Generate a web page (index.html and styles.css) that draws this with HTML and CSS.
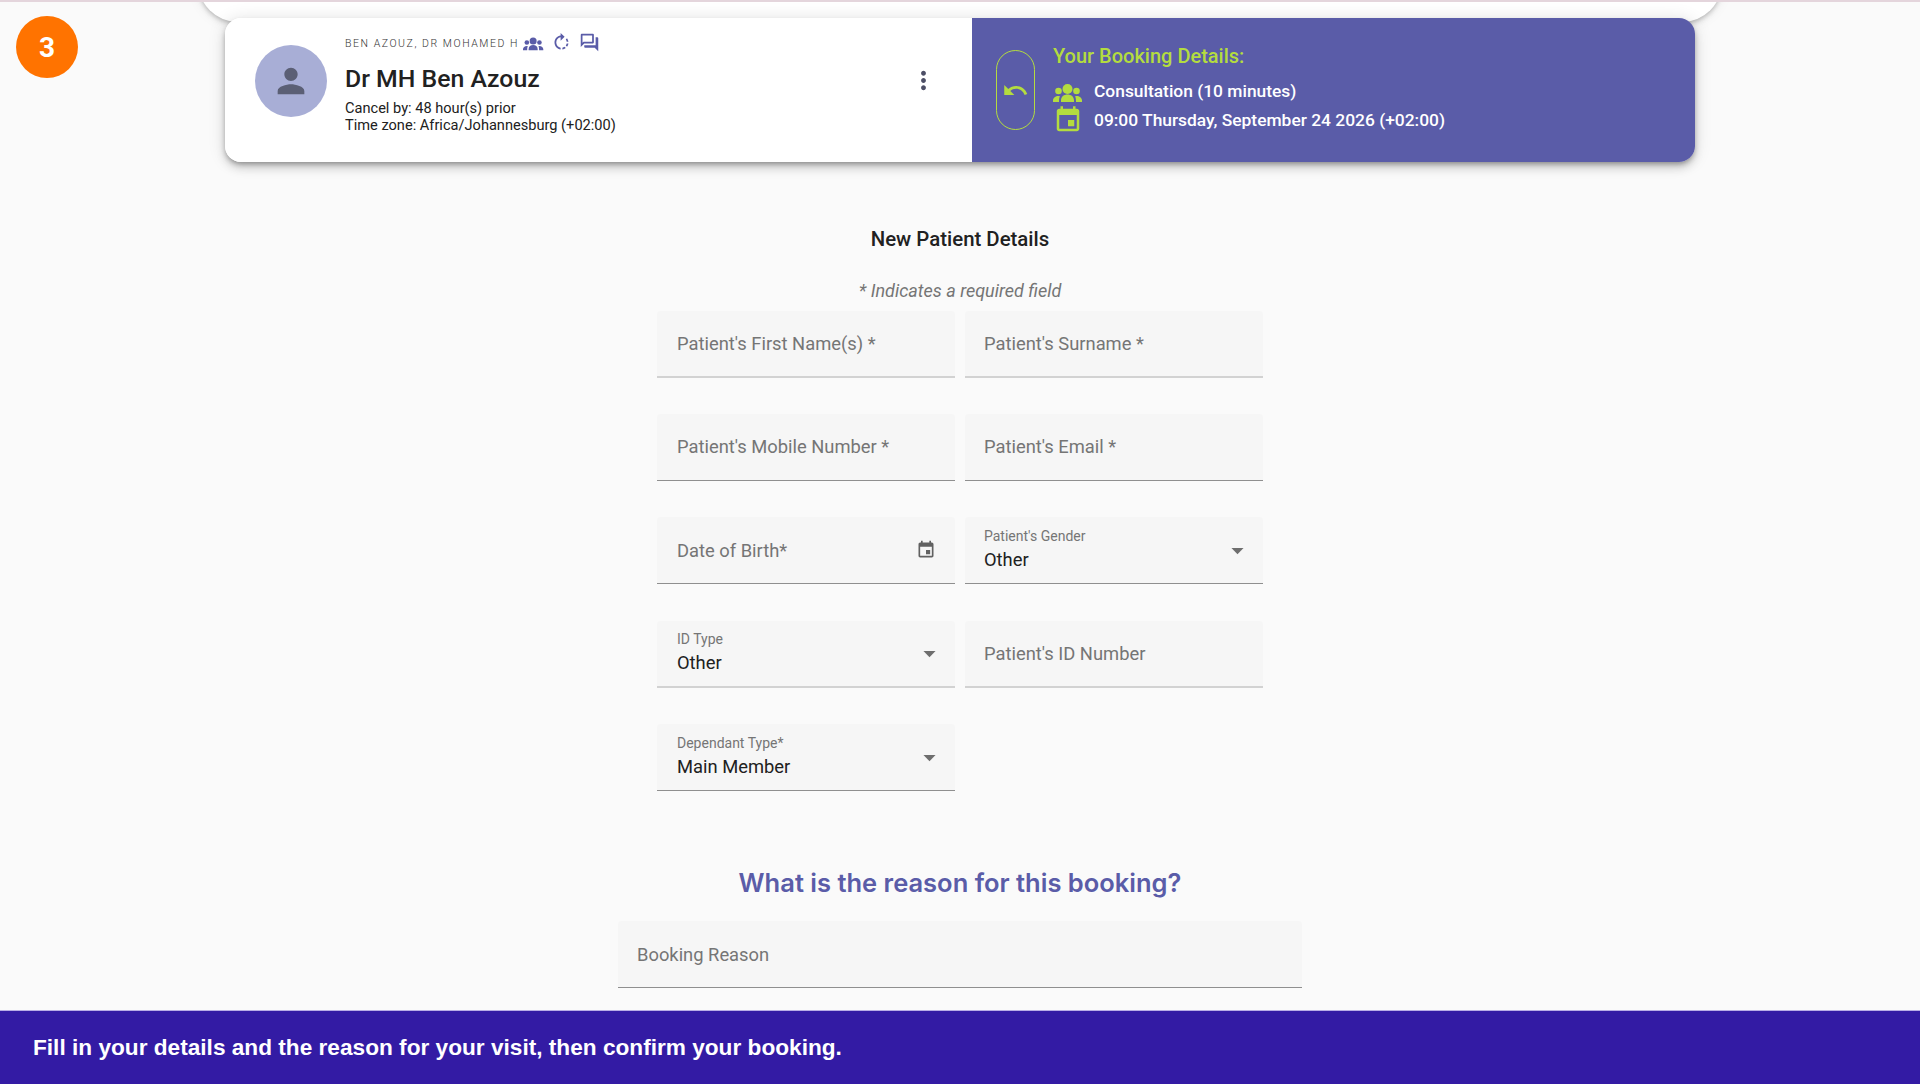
FILE: index.html
```html
<!DOCTYPE html>
<html lang="en">
<head>
    <meta charset="UTF-8">
    <meta name="viewport" content="width=device-width, initial-scale=1.0">
    <title>New Patient Details</title>
    <link rel="stylesheet" href="styles.css">
</head>
<body>
    <div class="step-badge">3</div>

    <div class="page">
        <main class="content">
            <div class="top-sheet"></div>

            <!-- Doctor and booking summary -->
            <section class="summary-card">
                <div class="doctor-panel">
                    <div class="avatar">
                        <svg viewBox="0 0 24 24" class="avatar-icon"><path d="M12 12c2.21 0 4-1.79 4-4s-1.79-4-4-4-4 1.79-4 4 1.79 4 4 4zm0 2c-2.67 0-8 1.34-8 4v2h16v-2c0-2.66-5.33-4-8-4z"/></svg>
                    </div>
                    <div class="doctor-info">
                        <div class="overline-row">
                            <span class="overline">BEN AZOUZ, DR MOHAMED H</span>
                            <svg viewBox="0 -2 30 30" class="mini-icon"><circle cx="14.5" cy="11" r="5"/><circle cx="5.5" cy="13" r="3.3"/><circle cx="23.5" cy="13" r="3.3"/><path d="M8 24v-1.5c0-4 3-6 6.5-6s6.5 2 6.5 6V24zM0 24v-1.5c0-2.5 2.5-4.5 5.5-4.5l1.5.2c-.8 1.2-1 2.8-1 5.8zM29 24v-1.5c0-2.5-2.5-4.5-5.500-4.500l-1.500.2c.8 1.2 1 2.800 1 5.800z"/></svg>
                            <svg viewBox="0 0 24 24" class="mini-icon"><path d="M15.55 5.55L11 1v3.07C7.06 4.56 4 7.92 4 12s3.05 7.44 7 7.93v-2.02c-2.84-.48-5-2.94-5-5.91s2.16-5.43 5-5.91V10l4.55-4.45zM19.93 11c-.17-1.39-.72-2.73-1.62-3.89l-1.42 1.42c.54.75.88 1.6 1.02 2.47h2.02zM13 17.9v2.02c1.39-.17 2.74-.71 3.9-1.61l-1.44-1.44c-.75.54-1.59.89-2.46 1.03zm3.89-2.42l1.42 1.41c.9-1.16 1.45-2.5 1.62-3.89h-2.02c-.14.87-.48 1.72-1.02 2.48z"/></svg>
                            <svg viewBox="0 0 24 24" class="mini-icon"><path d="M15 4v7H5.17L4 12.17V4h11m1-2H3c-.55 0-1 .45-1 1v14l4-4h10c.55 0 1-.45 1-1V3c0-.55-.45-1-1-1zm5 4h-2v9H6v2c0 .55.45 1 1 1h11l4 4V7c0-.55-.45-1-1-1z"/></svg>
                        </div>
                        <h1 class="doctor-name">Dr MH Ben Azouz</h1>
                        <p class="doctor-meta">Cancel by: 48 hour(s) prior<br>Time zone: Africa/Johannesburg (+02:00)</p>
                    </div>
                    <svg viewBox="0 0 24 24" class="more-icon"><path d="M12 8c1.1 0 2-.9 2-2s-.9-2-2-2-2 .9-2 2 .9 2 2 2zm0 2c-1.1 0-2 .9-2 2s.9 2 2 2 2-.9 2-2-.9-2-2-2zm0 6c-1.1 0-2 .9-2 2s.9 2 2 2 2-.9 2-2-.9-2-2-2z"/></svg>
                </div>
                <div class="booking-panel">
                    <div class="back-pill">
                        <svg viewBox="0 0 24 24" class="back-icon"><path d="M12.5 8c-2.65 0-5.05.99-6.9 2.6L2 7v9h9l-3.62-3.62c1.39-1.16 3.16-1.88 5.12-1.88 3.54 0 6.55 2.31 7.6 5.5l2.37-.78C21.08 11.03 17.15 8 12.5 8z"/></svg>
                    </div>
                    <div class="booking-info">
                        <div class="booking-title">Your Booking Details:</div>
                        <div class="booking-row">
                            <svg viewBox="0 -2 30 30" class="booking-icon"><circle cx="14.5" cy="11" r="5"/><circle cx="5.5" cy="13" r="3.3"/><circle cx="23.5" cy="13" r="3.3"/><path d="M8 24v-1.5c0-4 3-6 6.5-6s6.5 2 6.5 6V24zM0 24v-1.5c0-2.5 2.5-4.500 5.500-4.500l1.500.2c-.8 1.200-1 2.800-1 5.800zM29 24v-1.500c0-2.500-2.500-4.500-5.500-4.500l-1.500.2c.8 1.200 1 2.800 1 5.800z"/></svg>
                            <span>Consultation (10 minutes)</span>
                        </div>
                        <div class="booking-row">
                            <svg viewBox="0 0 24 24" class="booking-icon"><path d="M17 12h-5v5h5v-5zM16 1v2H8V1H6v2H5c-1.11 0-1.99.9-1.99 2L3 19c0 1.1.89 2 2 2h14c1.1 0 2-.9 2-2V5c0-1.1-.9-2-2-2h-1V1h-2zm3 18H5V8h14v11z"/></svg>
                            <span>09:00 Thursday, September 24 2026 (+02:00)</span>
                        </div>
                    </div>
                </div>
            </section>

            <h2 class="form-title">New Patient Details</h2>
            <p class="form-hint">* Indicates a required field</p>

            <div class="form-grid">
                <div class="field field-light"><span class="field-label">Patient's First Name(s) *</span></div>
                <div class="field field-light"><span class="field-label">Patient's Surname *</span></div>
                <div class="field"><span class="field-label">Patient's Mobile Number *</span></div>
                <div class="field"><span class="field-label">Patient's Email *</span></div>
                <div class="field">
                    <span class="field-label">Date of Birth*</span>
                    <svg viewBox="0 0 24 24" class="field-icon"><path d="M17 12h-5v5h5v-5zM16 1v2H8V1H6v2H5c-1.11 0-1.99.9-1.99 2L3 19c0 1.1.89 2 2 2h14c1.1 0 2-.9 2-2V5c0-1.1-.9-2-2-2h-1V1h-2zm3 18H5V8h14v11z"/></svg>
                </div>
                <div class="field">
                    <div class="field-stack"><span class="field-small">Patient's Gender</span><span class="field-value">Other</span></div>
                    <svg viewBox="0 0 24 24" class="field-arrow"><path d="M7 10l5 5 5-5z"/></svg>
                </div>
                <div class="field field-light">
                    <div class="field-stack"><span class="field-small">ID Type</span><span class="field-value">Other</span></div>
                    <svg viewBox="0 0 24 24" class="field-arrow"><path d="M7 10l5 5 5-5z"/></svg>
                </div>
                <div class="field field-light"><span class="field-label">Patient's ID Number</span></div>
                <div class="field">
                    <div class="field-stack"><span class="field-small">Dependant Type*</span><span class="field-value">Main Member</span></div>
                    <svg viewBox="0 0 24 24" class="field-arrow"><path d="M7 10l5 5 5-5z"/></svg>
                </div>
            </div>

            <h2 class="reason-title">What is the reason for this booking?</h2>
            <div class="field reason-field"><span class="field-label">Booking Reason</span></div>
        </main>

        <footer class="hint-bar">Fill in your details and the reason for your visit, then confirm your booking.</footer>
    </div>
</body>
</html>
```

FILE: styles.css
```css
* {
    box-sizing: border-box;
}

body {
    margin: 0;
    font-family: Roboto, Arial, sans-serif;
    background-color: #fafafa;
    color: #212121;
}

.page {
    height: 100vh;
    display: flex;
    flex-direction: column;
    overflow: hidden;
    border-top: 2px solid #e4d5dc;
}

.content {
    flex: 1;
    min-height: 0;
    display: flex;
    flex-direction: column;
    align-items: center;
}

/* Step badge */
.step-badge {
    position: absolute;
    top: 16px;
    left: 16px;
    width: 62px;
    height: 62px;
    display: flex;
    align-items: center;
    justify-content: center;
    border-radius: 50%;
    background-color: #ff7300;
    color: #fff;
    font-size: 28px;
    font-weight: 700;
}

/* Sheet peeking out above the card */
.top-sheet {
    width: 1524px;
    height: 43px;
    margin-top: -23px;
    background-color: #fff;
    border-radius: 0 0 40px 40px;
    box-shadow: 0 2px 4px -1px rgba(0, 0, 0, 0.2), 0 4px 5px rgba(0, 0, 0, 0.08), 0 1px 14px rgba(0, 0, 0, 0.08);
    flex-shrink: 0;
}

/* Summary card */
.summary-card {
    width: 1470px;
    height: 144px;
    margin-top: -4px;
    display: flex;
    position: relative;
    border-radius: 16px;
    overflow: hidden;
    box-shadow: 0 3px 5px -1px rgba(0, 0, 0, 0.3), 0 6px 10px rgba(0, 0, 0, 0.14), 0 1px 18px rgba(0, 0, 0, 0.12);
    flex-shrink: 0;
}

.doctor-panel {
    width: 747px;
    display: flex;
    align-items: flex-start;
    background-color: #fff;
    padding: 27px 0 0 30px;
}

.avatar {
    width: 72px;
    height: 72px;
    display: flex;
    align-items: center;
    justify-content: center;
    border-radius: 50%;
    background-color: #a8aed6;
    flex-shrink: 0;
}

.avatar-icon {
    width: 40px;
    height: 40px;
    fill: #5b5f75;
}

.doctor-info {
    margin-left: 18px;
    margin-top: -15px;
    flex: 1;
}

.overline-row {
    height: 24px;
    display: flex;
    align-items: center;
    gap: 7px;
}

.overline {
    margin-top: 2px;
    margin-right: -3px;
    font-size: 10.5px;
    font-weight: 300;
    letter-spacing: 1.55px;
    color: #333;
}

.mini-icon {
    width: 21px;
    height: 21px;
    fill: #5a5ca8;
}

.doctor-name {
    margin: 10px 0 0;
    font-size: 24.8px;
    line-height: 30px;
    font-weight: 500;
}

.doctor-meta {
    margin: 6px 0 0;
    font-size: 14.6px;
    line-height: 17px;
}

.more-icon {
    width: 29px;
    height: 29px;
    margin: 21px 34px 0 0;
    fill: #4d4f66;
}

.booking-panel {
    flex: 1;
    display: flex;
    background-color: #5a5ca8;
    padding: 32px 0 0 24px;
}

.back-pill {
    width: 39px;
    height: 80px;
    display: flex;
    align-items: center;
    justify-content: center;
    border: 1px solid #b4dc3f;
    border-radius: 20px;
    flex-shrink: 0;
}

.back-icon {
    width: 27px;
    height: 27px;
    fill: #b4dc3f;
}

.booking-info {
    margin-left: 18px;
    margin-top: -6px;
}

.booking-title {
    font-size: 20px;
    line-height: 24px;
    font-weight: 500;
    color: #b4dc3f;
    margin-bottom: 8px;
}

.booking-row {
    height: 29px;
    display: flex;
    align-items: center;
    gap: 11px;
    color: #fff;
    font-size: 17.4px;
    font-weight: 500;
}

.booking-icon {
    width: 30px;
    height: 30px;
    fill: #b4dc3f;
}

/* Form */
.form-title {
    margin: 65px 0 0;
    font-size: 20.4px;
    line-height: 24px;
    font-weight: 500;
}

.form-hint {
    margin: 28px 0 0;
    font-size: 18px;
    line-height: 24px;
    font-style: italic;
    color: #757575;
}

.form-grid {
    width: 606px;
    margin-top: 7.500px;
    display: grid;
    grid-template-columns: 298px 298px;
    column-gap: 10px;
    row-gap: 36.4px;
}

.field {
    height: 67px;
    display: flex;
    align-items: center;
    justify-content: space-between;
    padding: 0 20px;
    background-color: #f6f6f6;
    border-radius: 4px 4px 0 0;
    border-bottom: 1px solid #8f8f8f;
}

.form-grid .field:nth-child(even) {
    padding-left: 19px;
}

.field-light {
    border-bottom: 2px solid #d2d2d2;
}

.field-label {
    font-size: 18.35px;
    color: #757575;
}

.field-stack {
    display: flex;
    flex-direction: column;
    margin-top: -1px;
}

.field-small {
    font-size: 14px;
    line-height: 18px;
    margin-bottom: 2px;
    color: #757575;
}

.field-value {
    font-size: 18.35px;
    line-height: 26px;
    color: #212121;
}

.field-icon {
    width: 20px;
    height: 20px;
    margin-right: -1px;
    fill: #616161;
}

.field-arrow {
    width: 29px;
    height: 29px;
    margin-right: -9px;
    fill: #6e6e6e;
}

/* Booking reason */
.reason-title {
    margin: 76px 0 0;
    font-family: Inter, Roboto, sans-serif;
    font-size: 25.5px;
    line-height: 32px;
    font-weight: 600;
    color: #5a5ca8;
}

.reason-field {
    width: 684px;
    margin-top: 22px;
    padding-left: 19px;
}

/* Bottom hint */
.hint-bar {
    height: 74px;
    display: flex;
    align-items: center;
    padding-left: 33px;
    background-color: #331ba4;
    border-top: 1px solid #b9aee6;
    color: #fff;
    font-family: "Liberation Sans", Arial, sans-serif;
    font-size: 22.65px;
    font-weight: 700;
}
```
